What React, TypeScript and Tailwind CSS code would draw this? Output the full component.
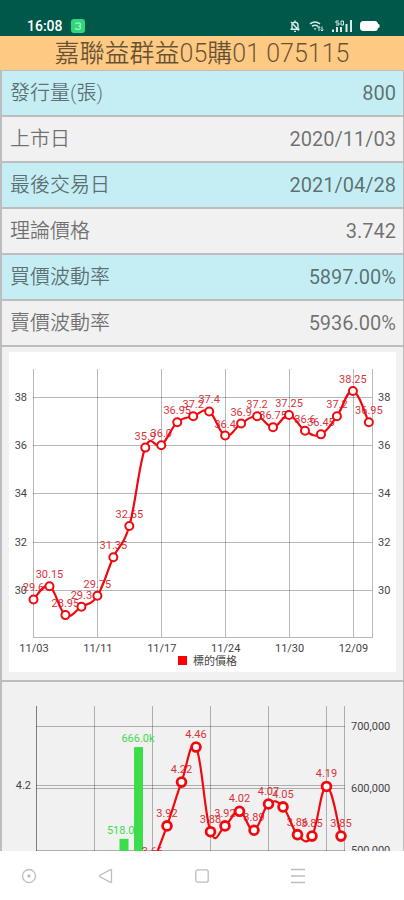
type Point = { x: number; y: number; label: string }

const rows = [
  { label: "發行量(張)", value: "800" },
  { label: "上市日", value: "2020/11/03" },
  { label: "最後交易日", value: "2021/04/28" },
  { label: "理論價格", value: "3.742" },
  { label: "買價波動率", value: "5897.00%" },
  { label: "賣價波動率", value: "5936.00%" },
]

const stockPrices = [
  "29.6", "30.15", "28.95", "29.3", "29.75", "31.35", "32.65", "35.9", "36.0", "36.95", "37.2",
  "37.4", "36.4", "36.9", "37.2", "36.75", "37.25", "36.6", "36.45", "37.2", "38.25", "36.95",
]
const dates = ["11/03", "11/11", "11/17", "11/24", "11/30", "12/09"]

// warrant prices start at the 9th trading day
const warrantPrices = [
  "3.66", "3.92", "4.22", "4.46", "3.88", "3.92", "4.02", "3.89", "4.07", "4.05", "3.86", "3.85", "4.19", "3.85",
]
const volumes = [
  { day: 6, value: 518 },
  { day: 7, value: 666 },
]

// cubic line with 0.2 intensity
function smoothPath(pts: Point[]) {
  let d = `M${pts[0].x} ${pts[0].y}`
  for (let i = 1; i < pts.length; i++) {
    const before = pts[Math.max(i - 2, 0)]
    const prev = pts[i - 1]
    const cur = pts[i]
    const next = pts[Math.min(i + 1, pts.length - 1)]
    d += ` C${prev.x + (cur.x - before.x) * 0.2} ${prev.y + (cur.y - before.y) * 0.2}`
    d += ` ${cur.x - (next.x - prev.x) * 0.2} ${cur.y - (next.y - prev.y) * 0.2} ${cur.x} ${cur.y}`
  }
  return d
}

function Series({ points, radius, stroke, lift }: { points: Point[]; radius: number; stroke: number; lift: number }) {
  return (
    <g>
      <g className="fill-[#d8343c] text-[11px]" textAnchor="middle">
        {points.map((p, i) => (
          <text key={i} x={p.x} y={p.y - lift}>{p.label}</text>
        ))}
      </g>
      <path d={smoothPath(points)} fill="none" stroke="#ee0a10" strokeWidth={2.2} />
      {points.map((p, i) => (
        <circle key={i} cx={p.x} cy={p.y} r={radius} fill="#fff" stroke="#f00a10" strokeWidth={stroke} />
      ))}
    </g>
  )
}

function StockChart() {
  const toY = (v: number) => 45 + (38 - v) * 24.1
  const points = stockPrices.map((v, i) => ({ x: 24.5 + i * 15.97, y: toY(Number(v)), label: v }))
  return (
    <svg viewBox="0 0 387 320" className="block w-full bg-white" role="img" aria-label="標的價格">
      <g stroke="#000" strokeOpacity={0.28}>
        {[38, 36, 34, 32, 30].map((v) => (
          <line key={v} x1={24} x2={363} y1={Math.round(toY(v)) + 0.5} y2={Math.round(toY(v)) + 0.5} />
        ))}
        {dates.map((d, i) => (
          <line key={d} x1={Math.round(24 + i * 63.9) + 0.5} x2={Math.round(24 + i * 63.9) + 0.5} y1={17} y2={285} />
        ))}
        <line x1={363.5} x2={363.5} y1={17} y2={285} />
        <line x1={24} x2={364} y1={285.5} y2={285.5} />
      </g>
      <g className="fill-[#444] text-[11px]">
        {[38, 36, 34, 32, 30].map((v) => (
          <g key={v}>
            <text x={18} y={toY(v) + 4} textAnchor="end">{v}</text>
            <text x={369} y={toY(v) + 4}>{v}</text>
          </g>
        ))}
        {dates.map((d, i) => (
          <text key={d} x={25 + i * 63.9} y={300} textAnchor="middle">{d}</text>
        ))}
        <text x={184} y={313}>標的價格</text>
      </g>
      <rect x={169} y={304} width={9} height={9} fill="#f00" />
      <Series points={points} radius={4} stroke={2} lift={8} />
    </svg>
  )
}

function WarrantChart() {
  const priceY = (v: number) => 96 + (4.2 - v) * 146
  const volumeY = (v: number) => 37 + (700 - v) * 0.62
  const points = warrantPrices.map((v, i) => ({ x: 27.5 + (i + 8) * 14.5, y: priceY(Number(v)), label: v }))
  return (
    <svg viewBox="0 0 387 172" className="block w-full" role="img" aria-label="權證價格與成交量">
      <g stroke="#000" strokeOpacity={0.28}>
        {[37.5, 96.5, 99.5, 161.5].map((y) => (
          <line key={y} x1={27} x2={336} y1={y} y2={y} />
        ))}
        {[0, 1, 2, 3, 4, 5].map((i) => (
          <line key={i} x1={27.5 + i * 58} x2={27.5 + i * 58} y1={17} y2={172} />
        ))}
        <line x1={27.5} x2={27.5} y1={17} y2={172} />
        <line x1={335.5} x2={335.5} y1={17} y2={172} />
      </g>
      <g className="fill-[#444] text-[11px]">
        <text x={22} y={100} textAnchor="end">4.2</text>
        <text x={342} y={41}>700,000</text>
        <text x={342} y={103}>600,000</text>
        <text x={342} y={165}>500,000</text>
      </g>
      {volumes.map(({ day, value }) => (
        <g key={day} className="fill-[#3bdd4b] text-[11px]">
          <text x={27.5 + day * 14.5} y={volumeY(value) - 5} textAnchor="middle">{value}.0k</text>
          <rect x={23.5 + day * 14.5} y={volumeY(value)} width={9} height={172 - volumeY(value)} />
        </g>
      ))}
      <Series points={points} radius={4.4} stroke={2.8} lift={9} />
    </svg>
  )
}

function StatusBar() {
  return (
    <header className="flex h-9 shrink-0 items-end justify-between bg-[#00584a] pl-[27px] pr-6 text-white">
      <div className="flex items-center gap-2">
        <span className="text-sm font-medium">16:08</span>
        <svg viewBox="0 0 14 14" className="size-[14px]">
          <rect width="14" height="14" rx="3" fill="#2fd67c" />
          <path d="M4.5 5.2q0-1.400 2.500-1.400t2.500 1.600-2 1.600q2 0 2 1.700t-2.500 1.600-2.500-1.400" fill="none" stroke="#a9f3cb" strokeWidth="1.2" />
        </svg>
      </div>
      <div className="flex h-5 items-center gap-2">
        <svg viewBox="0 0 12 14" className="h-[14px] w-3" fill="none" stroke="#d9ebe6" strokeWidth="1.4">
          <path d="M3 10V6.2a3 3 0 0 1 6 0V10M1.5 10.3h9M5 12.4h2M6 1.6v1.6M2 3l8 8.5" />
        </svg>
        <svg viewBox="0 0 15 12" className="h-3 w-[15px]" fill="none" stroke="#d9ebe6" strokeWidth="1.5">
          <path d="M1 3.8q5-3.6 10 0M3 6.3q3-2.2 6 0" />
          <path d="M4.6 8.2h3L6 10z" fill="#d9ebe6" stroke="none" />
          <path d="M10 11V6.5M8.7 8 10 6.5 11.3 8M13 6.5V11M11.7 9.5 13 11l1.3-1.5" strokeWidth="1" />
        </svg>
        <svg viewBox="0 0 20 12" className="h-3 w-5" fill="#d9ebe6">
          <path d="M0 9.500h2V12H0zM4 7h2v5H4zM8 7h2v5H8zM13.500 4h2v8h-2zM18 0h2v12h-2z" />
          <path d="M7 1H4v2h3v2H4M9 5V1h2.500v4z" fill="none" stroke="#d9ebe6" strokeWidth="1" />
        </svg>
        <svg viewBox="0 0 20 12" className="h-3 w-5" fill="#fff">
          <rect y="1" width="18" height="10" rx="3.500" />
          <rect x="18" y="4" width="1.500" height="4" rx="0.700" />
        </svg>
      </div>
    </header>
  )
}

function NavBar() {
  const buttons = [
    { label: "Back", icon: <path d="M13.500 2.300v11.400q0 1.100-1 .6L2 8.800Q1 8 2 7.200l10.500-5.500q1-.5 1 .6z" /> },
    { label: "Home", icon: <rect x="1.800" y="1.800" width="12.400" height="12.400" rx="2" /> },
    { label: "Menu", icon: <path d="M1 1.500h14M1 8h14M1 14.500h14" /> },
  ]
  return (
    <nav className="flex h-[49px] shrink-0 items-center gap-[61px] bg-white pl-[21px]">
      <button aria-label="Assistant">
        <svg viewBox="0 0 16 16" className="size-4" fill="none" stroke="#bdbdbd" strokeWidth="1.300">
          <circle cx="8" cy="8" r="6.500" />
          <circle cx="8" cy="8" r="1" fill="#bbb" />
        </svg>
      </button>
      <div className="flex gap-20">
        {buttons.map(({ label, icon }) => (
          <button key={label} aria-label={label}>
            <svg viewBox="0 0 16 16" className="size-4" fill="none" stroke="#bdbdbd" strokeWidth="1.300">
              {icon}
            </svg>
          </button>
        ))}
      </div>
    </nav>
  )
}

export default function App() {
  return (
    <div className="flex h-screen flex-col overflow-hidden bg-[#bdbdbd] font-[Roboto,'Noto_Sans_CJK_TC',sans-serif]">
      <StatusBar />
      <h1 className="flex h-[34px] shrink-0 items-end justify-center bg-[#fdc983] text-[25px] font-[350] leading-8 text-black/60">
        嘉聯益群益05購01 075115
      </h1>
      <main className="flex min-h-0 flex-1 flex-col gap-[2px] overflow-hidden pl-[2px] pr-px pt-px">
        <dl className="flex shrink-0 flex-col gap-[2px]">
          {rows.map(({ label, value }) => (
            <div
              key={label}
              className="flex h-11 items-center justify-between bg-[#f1f1f1] pl-2 pr-[7px] text-xl text-black/55 odd:bg-[#c5eef4]"
            >
              <dt className="font-[350]">{label}</dt>
              <dd>{value}</dd>
            </div>
          ))}
        </dl>
        <section className="shrink-0 bg-[#f1f1f1] px-[7px] pb-2 pt-[5px]">
          <StockChart />
        </section>
        <section className="shrink-0 bg-[#f1f1f1] px-[7px] pt-[7px]">
          <WarrantChart />
        </section>
      </main>
      <NavBar />
    </div>
  )
}
